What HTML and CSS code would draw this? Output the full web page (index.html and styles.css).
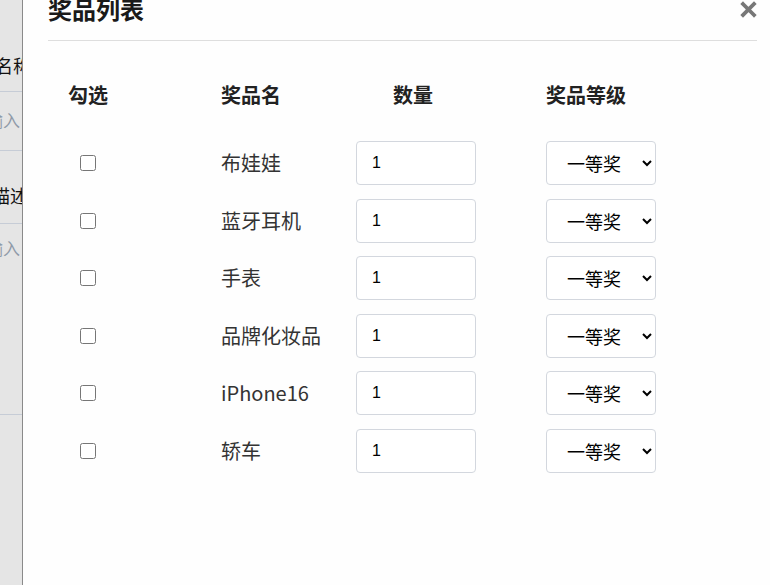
FILE: index.html
```html
<!DOCTYPE html>
<html lang="zh-CN">
<head>
<meta charset="utf-8">
<title>奖品列表</title>
<link rel="stylesheet" href="styles.css">
</head>
<body>
<div class="page">
  <div class="backdrop">
    <div class="bg-form">
      <div class="bg-row bg-r1"><span class="bg-label lab1">名称</span></div>
      <div class="bg-row bg-r2"><span class="bg-ph ph1">请输入</span></div>
      <div class="bg-row bg-r3"><span class="bg-label lab2">描述</span></div>
      <div class="bg-row bg-r4"><span class="bg-ph ph2">请输入</span></div>
    </div>
  </div>
  <div class="modal">
    <div class="modal-header">
      <h2 class="modal-title">奖品列表</h2>
      <svg class="close" width="17" height="17" viewBox="0 0 17 17" aria-label="关闭">
        <path d="M3 3 L14 14 M14 3 L3 14" stroke="#777" stroke-width="3.8" stroke-linecap="square" fill="none"/>
      </svg>
    </div>
    <div class="table">
      <div class="row head">
        <div class="cell c1"><span class="center">勾选</span></div>
        <div class="cell">奖品名</div>
        <div class="cell"><span class="h-qty">数量</span></div>
        <div class="cell">奖品等级</div>
      </div>
      <div class="body">
        <div class="row item">
          <div class="cell c1"><span class="center"><input type="checkbox" class="chk"></span></div>
          <div class="cell name">布娃娃</div>
          <div class="cell"><input class="qty" type="text" value="1"></div>
          <div class="cell"><select class="level"><option>一等奖</option><option>二等奖</option><option>三等奖</option></select></div>
        </div>
        <div class="row item">
          <div class="cell c1"><span class="center"><input type="checkbox" class="chk"></span></div>
          <div class="cell name">蓝牙耳机</div>
          <div class="cell"><input class="qty" type="text" value="1"></div>
          <div class="cell"><select class="level"><option>一等奖</option><option>二等奖</option><option>三等奖</option></select></div>
        </div>
        <div class="row item">
          <div class="cell c1"><span class="center"><input type="checkbox" class="chk"></span></div>
          <div class="cell name">手表</div>
          <div class="cell"><input class="qty" type="text" value="1"></div>
          <div class="cell"><select class="level"><option>一等奖</option><option>二等奖</option><option>三等奖</option></select></div>
        </div>
        <div class="row item">
          <div class="cell c1"><span class="center"><input type="checkbox" class="chk"></span></div>
          <div class="cell name">品牌化妆品</div>
          <div class="cell"><input class="qty" type="text" value="1"></div>
          <div class="cell"><select class="level"><option>一等奖</option><option>二等奖</option><option>三等奖</option></select></div>
        </div>
        <div class="row item">
          <div class="cell c1"><span class="center"><input type="checkbox" class="chk"></span></div>
          <div class="cell name">iPhone16</div>
          <div class="cell"><input class="qty" type="text" value="1"></div>
          <div class="cell"><select class="level"><option>一等奖</option><option>二等奖</option><option>三等奖</option></select></div>
        </div>
        <div class="row item">
          <div class="cell c1"><span class="center"><input type="checkbox" class="chk"></span></div>
          <div class="cell name">轿车</div>
          <div class="cell"><input class="qty" type="text" value="1"></div>
          <div class="cell"><select class="level"><option>一等奖</option><option>二等奖</option><option>三等奖</option></select></div>
        </div>
      </div>
    </div>
  </div>
</div>
</body>
</html>
```
FILE: styles.css
```css
* { box-sizing: border-box; }
html, body {
  margin: 0;
  padding: 0;
  width: 770px;
  height: 585px;
  overflow: hidden;
  font-family: "Noto Sans CJK SC", "Noto Sans", sans-serif;
}
.page {
  display: flex;
  height: 585px;
}
.backdrop {
  width: 23px;
  flex: 0 0 23px;
  background: #e5e5e5;
  border-right: 1px solid #8a8a8a;
  overflow: hidden;
}
.bg-form {
  width: 200px;
}
.bg-row {
  display: flex;
  align-items: center;
  border-bottom: 1px solid #c6ccd6;
  line-height: 20px;
  white-space: nowrap;
}
.bg-r1 { height: 92px; padding-top: 38px; }
.bg-r2 { height: 59px; padding-bottom: 2px; }
.bg-r3 { height: 73px; padding-top: 16px; }
.bg-r4 { height: 191px; align-items: flex-start; padding-top: 14px; }
.bg-label { color: #111; font-size: 18px; }
.lab1 { margin-left: -5px; }
.lab2 { margin-left: -8px; }
.bg-ph { color: #8f9aa8; font-size: 17px; }
.ph1 { margin-left: -31px; }
.ph2 { margin-left: -31px; }

.modal {
  flex: 1;
  background: #fefefe;
  padding: 0 13px 0 25px;
}
.modal-header {
  display: flex;
  justify-content: space-between;
  align-items: flex-start;
  height: 44px;
  margin-top: -3px;
  border-bottom: 1px solid #dedede;
}
.modal-title {
  margin: 0;
  font-size: 24px;
  line-height: 24px;
  font-weight: 700;
  color: #1a1a1a;
}
.close {
  margin-top: 4px;
  margin-right: 0;
}
.table {
  padding-top: 34px;
}
.row {
  display: grid;
  grid-template-columns: 173px 135px 190px 1fr;
  align-items: center;
}
.head {
  height: 40px;
  font-size: 20px;
  font-weight: 700;
  color: #222;
}
.body {
  margin-top: 19.5px;
}
.item {
  height: 57.5px;
  font-size: 20px;
  color: #333;
}
.cell { line-height: 24px; }
.c1 .center {
  display: flex;
  justify-content: center;
  width: 80px;
}
.h-qty { padding-left: 37px; }
.chk {
  margin: 0;
  width: 16px;
  height: 16px;
}
.qty {
  width: 120px;
  height: 44px;
  border: 1px solid #d3d7de;
  border-radius: 4px;
  padding: 0 15px;
  font-family: "Liberation Sans", sans-serif;
  font-size: 16px;
  color: #000;
  background: #fff;
  outline: none;
}
.level {
  width: 110px;
  height: 44px;
  border: 1px solid #d3d7de;
  border-radius: 4px;
  padding: 0 0 0 16px;
  font-family: "Noto Sans CJK SC", sans-serif;
  font-size: 18px;
  color: #000;
  background: #fff;
}
```
